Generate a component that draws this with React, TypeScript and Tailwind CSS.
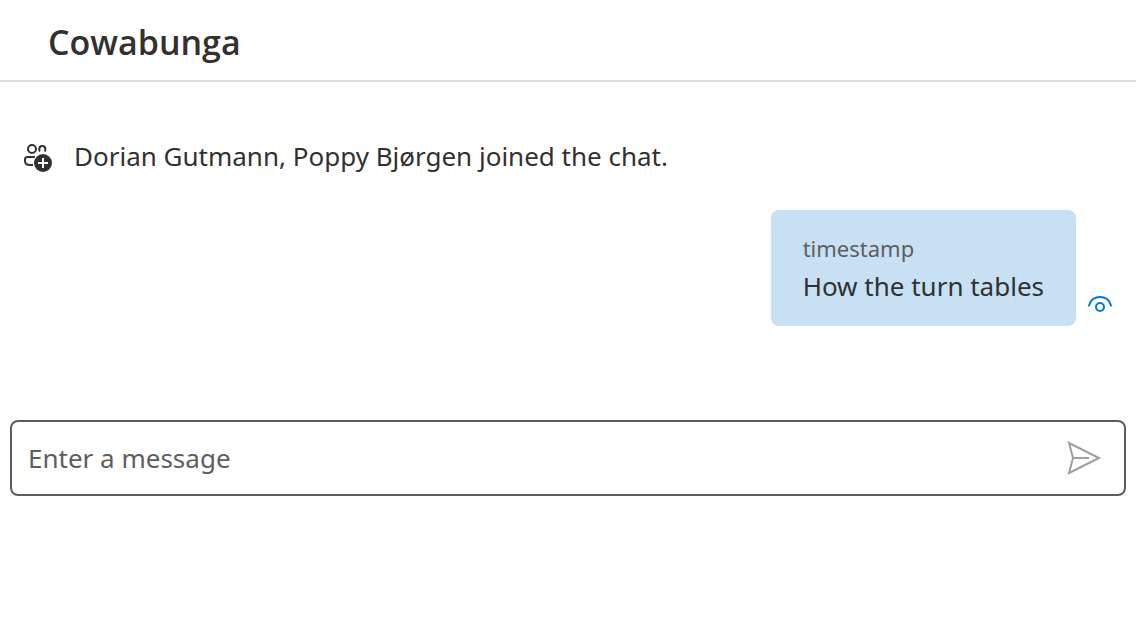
export default function App() {
  return (
    <div className="min-h-screen bg-white font-['Noto_Sans','Open_Sans',sans-serif] text-[#323130]">
      <header className="border-b-2 border-[#dcdbda] px-12 pt-[18px] pb-[14px]">
        <h1 className="font-['Open_Sans','Noto_Sans',sans-serif] text-[34px] leading-12 font-semibold">Cowabunga</h1>
      </header>
      <main>
        <ul className="px-6 pt-13">
          <li className="flex items-center gap-5 text-[26px] leading-11">
            <svg viewBox="0 0 30 32" className="h-8 w-[30px] shrink-0" fill="none" stroke="#323130" strokeWidth="2" aria-hidden="true">
              <circle cx="8" cy="9" r="4" />
              <path d="M16 11.500Q15 10.500 15.300 9a3 3 0 0 1 6 0Q21.500 10.500 20.700 11.500" />
              <path d="M11 17H3.500Q1 17 1 19.500V21Q1 25 6 25H9" />
              <circle cx="19" cy="23" r="10" fill="#fff" stroke="none" />
              <circle cx="19" cy="23" r="9" fill="#323130" stroke="none" />
              <path d="M19 18v10M14 23h10" stroke="#fff" />
            </svg>
            <p>Dorian Gutmann, Poppy Bjørgen joined the chat.</p>
          </li>
          <li className="mt-8 flex items-end justify-end gap-3">
            <div className="rounded-lg bg-[#c7e0f4] px-8 py-5">
              <p className="text-[22px] leading-9 text-[#605e5c]">timestamp</p>
              <p className="text-[26px] leading-10">How the turn tables</p>
            </div>
            <svg viewBox="0 0 24 24" className="mb-2.5 h-6 w-6 shrink-0" fill="none" stroke="#0078d4" strokeWidth="2" role="img" aria-label="Seen">
              <path d="M1 13.500C3.500 2 20.500 2 23 13.500" strokeLinecap="round" />
              <circle cx="12" cy="15" r="4" />
            </svg>
          </li>
        </ul>
        <form className="mx-[10px] mt-[94px] flex h-[76px] items-center rounded-lg border-2 border-[#605e5c] pr-[22px] pl-4" onSubmit={(e) => e.preventDefault()}>
          <input aria-label="Enter a message" placeholder="Enter a message" className="min-w-0 flex-1 bg-transparent text-[26px] leading-10 outline-none placeholder:text-[#605e5c]" />
          <button type="submit" aria-label="Send message">
            <svg viewBox="0 0 36 36" className="h-9 w-9" fill="none" stroke="#a19f9d" strokeWidth="2" aria-hidden="true">
              <path d="M3 3l30 15L3 33l4-15zM7 18h16" />
            </svg>
          </button>
        </form>
      </main>
    </div>
  );
}
